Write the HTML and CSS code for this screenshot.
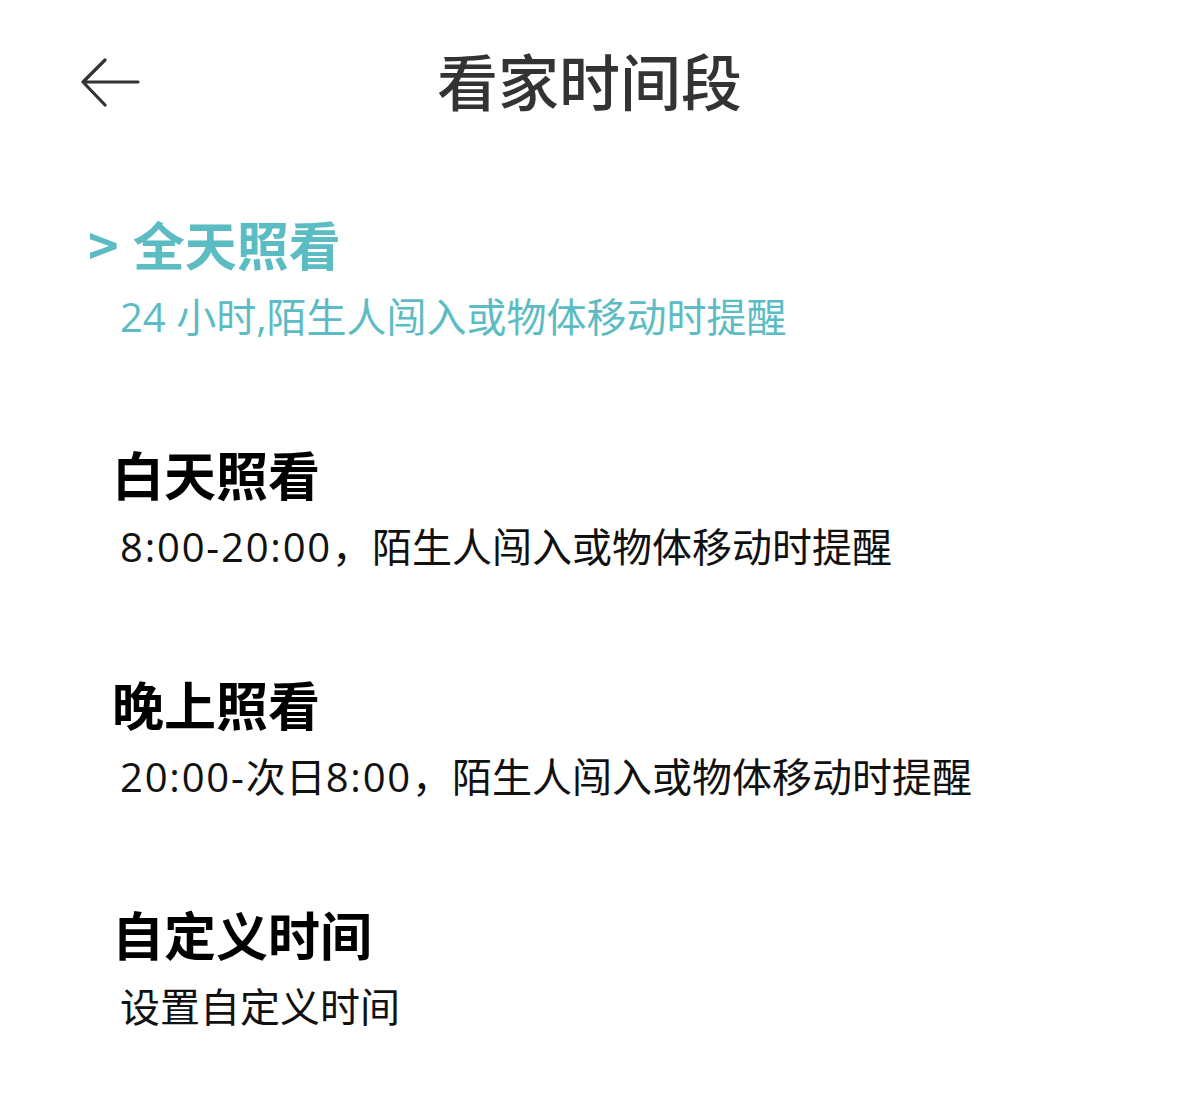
FILE: index.html
```html
<!DOCTYPE html>
<html lang="zh-CN">
<head>
<meta charset="UTF-8">
<meta name="viewport" content="width=device-width, initial-scale=1.0">
<title>看家时间段</title>
<link rel="stylesheet" href="styles.css">
</head>
<body>
<div class="header">
  <!-- back button -->
  <svg class="back" width="60" height="50" viewBox="0 0 60 50">
    <path d="M2 24 H57 M24 2 L2 24 L24 47" fill="none" stroke="#333" stroke-width="3.2" stroke-linecap="round" stroke-linejoin="round"/>
  </svg>
  <h1 class="title">看家时间段</h1>
</div>

<div class="list">
  <div class="item selected">
    <div class="name"><span class="mark">&gt;</span>全天照看</div>
    <div class="desc">24 小时,陌生人闯入或物体移动时提醒</div>
  </div>
  <div class="item">
    <div class="name">白天照看</div>
    <div class="desc"><span class="num">8:00-20:00</span>，陌生人闯入或物体移动时提醒</div>
  </div>
  <div class="item">
    <div class="name">晚上照看</div>
    <div class="desc"><span class="num">20:00-</span>次日<span class="num">8:00</span>，陌生人闯入或物体移动时提醒</div>
  </div>
  <div class="item">
    <div class="name">自定义时间</div>
    <div class="desc">设置自定义时间</div>
  </div>
</div>
</body>
</html>
```

FILE: styles.css
```css
/* page */
body {
  margin: 0;
  padding: 0;
  background: #fff;
  font-family: "Noto Sans CJK SC", "Noto Sans", sans-serif;
  color: #111;
}

.header {
  position: relative;
  height: 160px;
  display: flex;
  align-items: center;
  justify-content: center;
}

.back {
  position: absolute;
  left: 81px;
  top: 58px;
}

.title {
  margin: 0;
  font-size: 61px;
  font-weight: 500;
  line-height: 70px;
  color: #333;
}

.list {
  padding: 54px 0 0 112px;
}

.item {
  display: flex;
  flex-direction: column;
  gap: 18px;
  margin-bottom: 102px;
}

.name {
  font-size: 52px;
  font-weight: 700;
  line-height: 60px;
  color: #000;
}

.desc {
  font-family: "Open Sans", "Noto Sans CJK SC", sans-serif;
  font-size: 40px;
  line-height: 50px;
  padding-left: 8px;
  color: #111;
}

/* digits are a little wider on the device */
.num {
  letter-spacing: 1.8px;
}

.selected .name,
.selected .desc {
  color: #5cbcc3;
}

.selected .name {
  margin-left: -24px;
}

.mark {
  margin-right: 14px;
}
```
